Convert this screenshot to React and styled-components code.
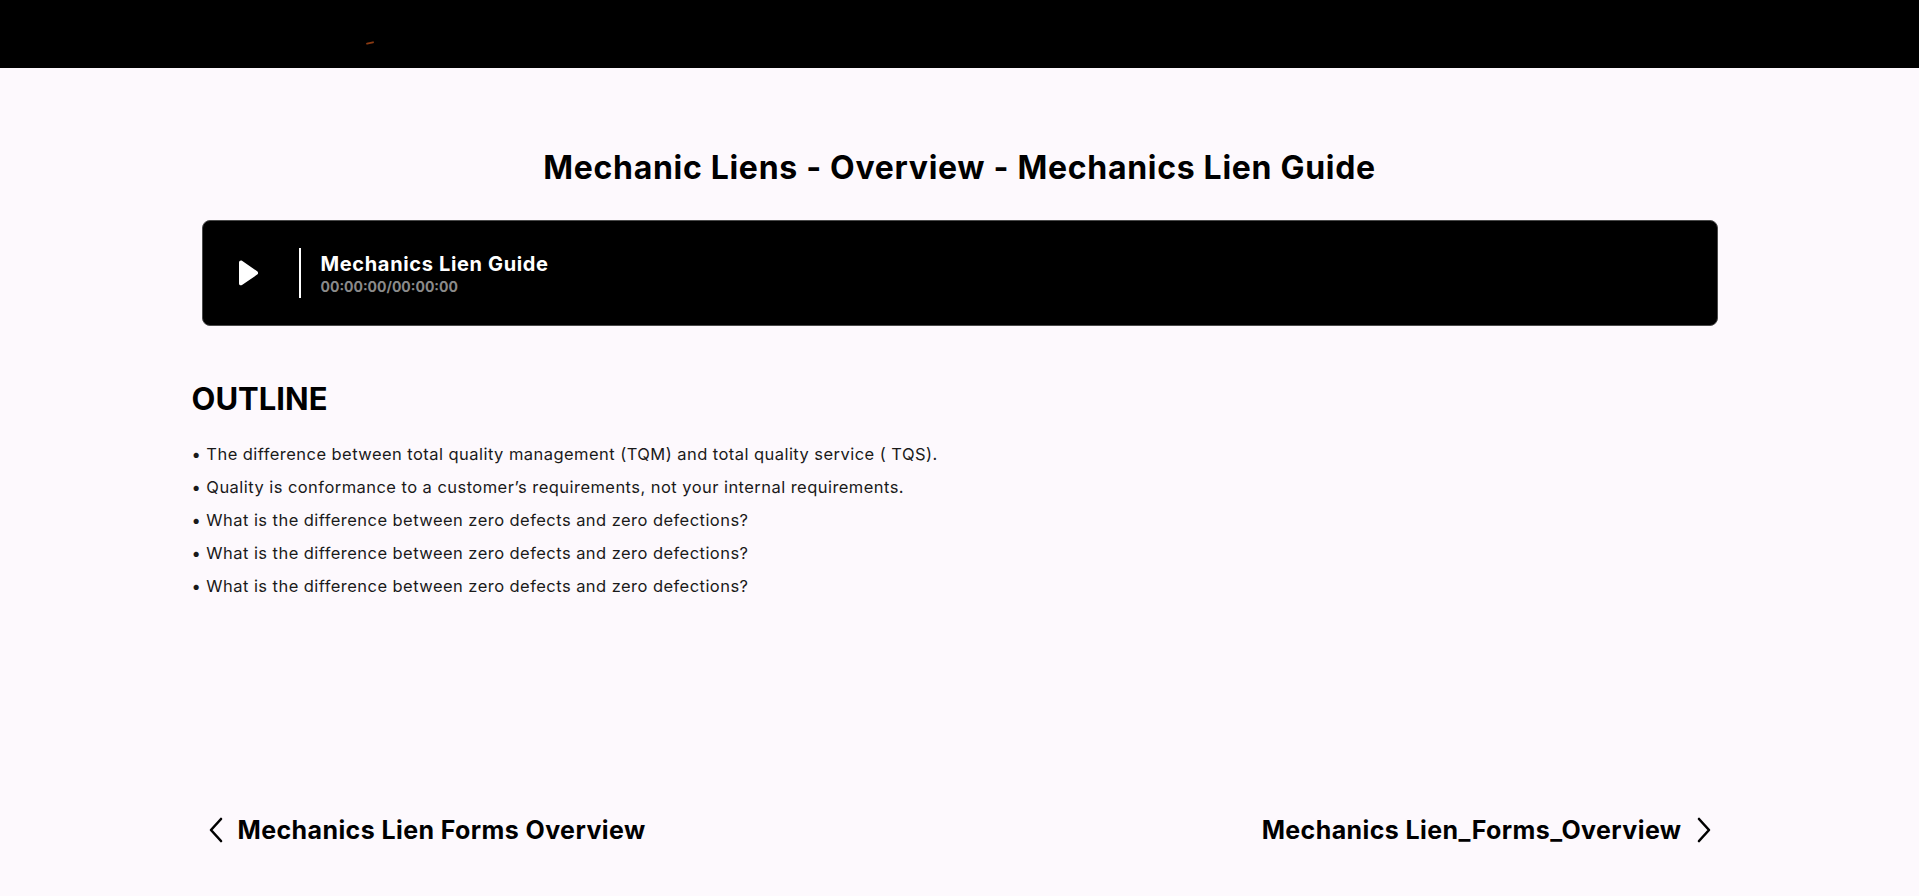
import React from "react";
import styled, { createGlobalStyle } from "styled-components";

const GlobalStyle = createGlobalStyle`
  * { box-sizing: border-box; }
  body {
    margin: 0;
    background: #fdf9fd;
    font-family: Inter, "Liberation Sans", sans-serif;
    color: #000;
  }
`;

const outline = [
  "The difference between total quality management (TQM) and total quality service ( TQS).",
  "Quality is conformance to a customer\u2019s requirements, not your internal requirements.",
  "What is the difference between zero defects and zero defections?",
  "What is the difference between zero defects and zero defections?",
  "What is the difference between zero defects and zero defections?",
];

function PlayIcon() {
  return (
    <svg width="24" height="28" viewBox="0 0 24 28">
      <path
        d="M3 3.5c0-1.6 1.7-2.5 3-1.7l15.2 10.4c1.2.8 1.2 2.6 0 3.4L6 26c-1.3.9-3 0-3-1.6z"
        fill="#fff"
      />
    </svg>
  );
}

function Chevron({ dir }) {
  return (
    <svg width="16" height="26" viewBox="0 0 16 26">
      <path
        d={dir === "left" ? "M13 2 L3 13 L13 24" : "M3 2 L13 13 L3 24"}
        fill="none"
        stroke="#000"
        strokeWidth="2.6"
        strokeLinecap="round"
        strokeLinejoin="round"
      />
    </svg>
  );
}

export default function App() {
  return (
    <Page>
      <GlobalStyle />
      <Header>
        <Logo>
          <LogoSpark />
        </Logo>
      </Header>
      <Main>
        <Title>Mechanic Liens - Overview - Mechanics Lien Guide</Title>
        <Player>
          <PlayButton>
            <PlayIcon />
          </PlayButton>
          <Divider />
          <TrackInfo>
            <TrackName>Mechanics Lien Guide</TrackName>
            <TrackTime>00:00:00/00:00:00</TrackTime>
          </TrackInfo>
        </Player>
        <OutlineHeading>OUTLINE</OutlineHeading>
        <OutlineList>
          {outline.map((item, i) => (
            <li key={i}>• {item}</li>
          ))}
        </OutlineList>
      </Main>
      <Pager>
        <PagerLink>
          <Chevron dir="left" />
          <span>Mechanics Lien Forms Overview</span>
        </PagerLink>
        <PagerLink>
          <span>Mechanics Lien_Forms_Overview</span>
          <Chevron dir="right" />
        </PagerLink>
      </Pager>
    </Page>
  );
}

const Page = styled.div`
  min-height: 100vh;
  display: flex;
  flex-direction: column;
`;

const Header = styled.header`
  height: 68px;
  background: #000;
  display: flex;
  align-items: center;
  padding-left: 366px;
`;

const Logo = styled.div`
  display: flex;
  align-items: center;
  padding-top: 18px;
`;

const LogoSpark = styled.span`
  width: 8px;
  height: 2px;
  border-radius: 2px;
  background: #8a3a12;
  transform: rotate(-12deg);
`;

const Main = styled.main`
  width: 1536px;
  margin: 0 auto;
  display: flex;
  flex-direction: column;
`;

const Title = styled.h1`
  margin: 80px 0 0;
  text-align: center;
  font-size: 32px;
  font-weight: 700;
  line-height: 40px;
  letter-spacing: 0.7px;
`;

const Player = styled.div`
  margin: 32px 10px 0;
  height: 106px;
  background: #000;
  border: 1px solid #4a4a4a;
  border-radius: 8px;
  display: flex;
  align-items: center;
  padding-left: 33px;
`;

const PlayButton = styled.div`
  width: 24px;
  display: flex;
  align-items: center;
  justify-content: center;
`;

const Divider = styled.div`
  width: 2px;
  height: 50px;
  background: #fff;
  margin: 0 20px 0 39px;
`;

const TrackInfo = styled.div`
  display: flex;
  flex-direction: column;
  gap: 2px;
  padding-top: 2px;
`;

const TrackName = styled.div`
  color: #fff;
  font-size: 20px;
  font-weight: 700;
  line-height: 24px;
  letter-spacing: 0.65px;
`;

const TrackTime = styled.div`
  color: #8a8a8a;
  font-size: 14px;
  font-weight: 700;
  line-height: 18px;
`;

const OutlineHeading = styled.h2`
  margin: 53px 0 0;
  font-size: 31px;
  font-weight: 700;
  line-height: 40px;
`;

const OutlineList = styled.ul`
  list-style: none;
  margin: 19px 0 0;
  padding: 0;
  li {
    font-size: 16.5px;
    font-weight: 400;
    line-height: 33px;
    letter-spacing: 0.45px;
    color: #1a1a1a;
  }
`;

const Pager = styled.nav`
  margin-top: auto;
  width: 1536px;
  margin-left: auto;
  margin-right: auto;
  padding: 0 16px 49px;
  display: flex;
  justify-content: space-between;
  align-items: center;
`;

const PagerLink = styled.a`
  display: flex;
  align-items: center;
  gap: 14px;
  font-size: 25px;
  font-weight: 700;
  line-height: 34px;
  letter-spacing: 0.4px;
  color: #000;
  cursor: pointer;
`;
